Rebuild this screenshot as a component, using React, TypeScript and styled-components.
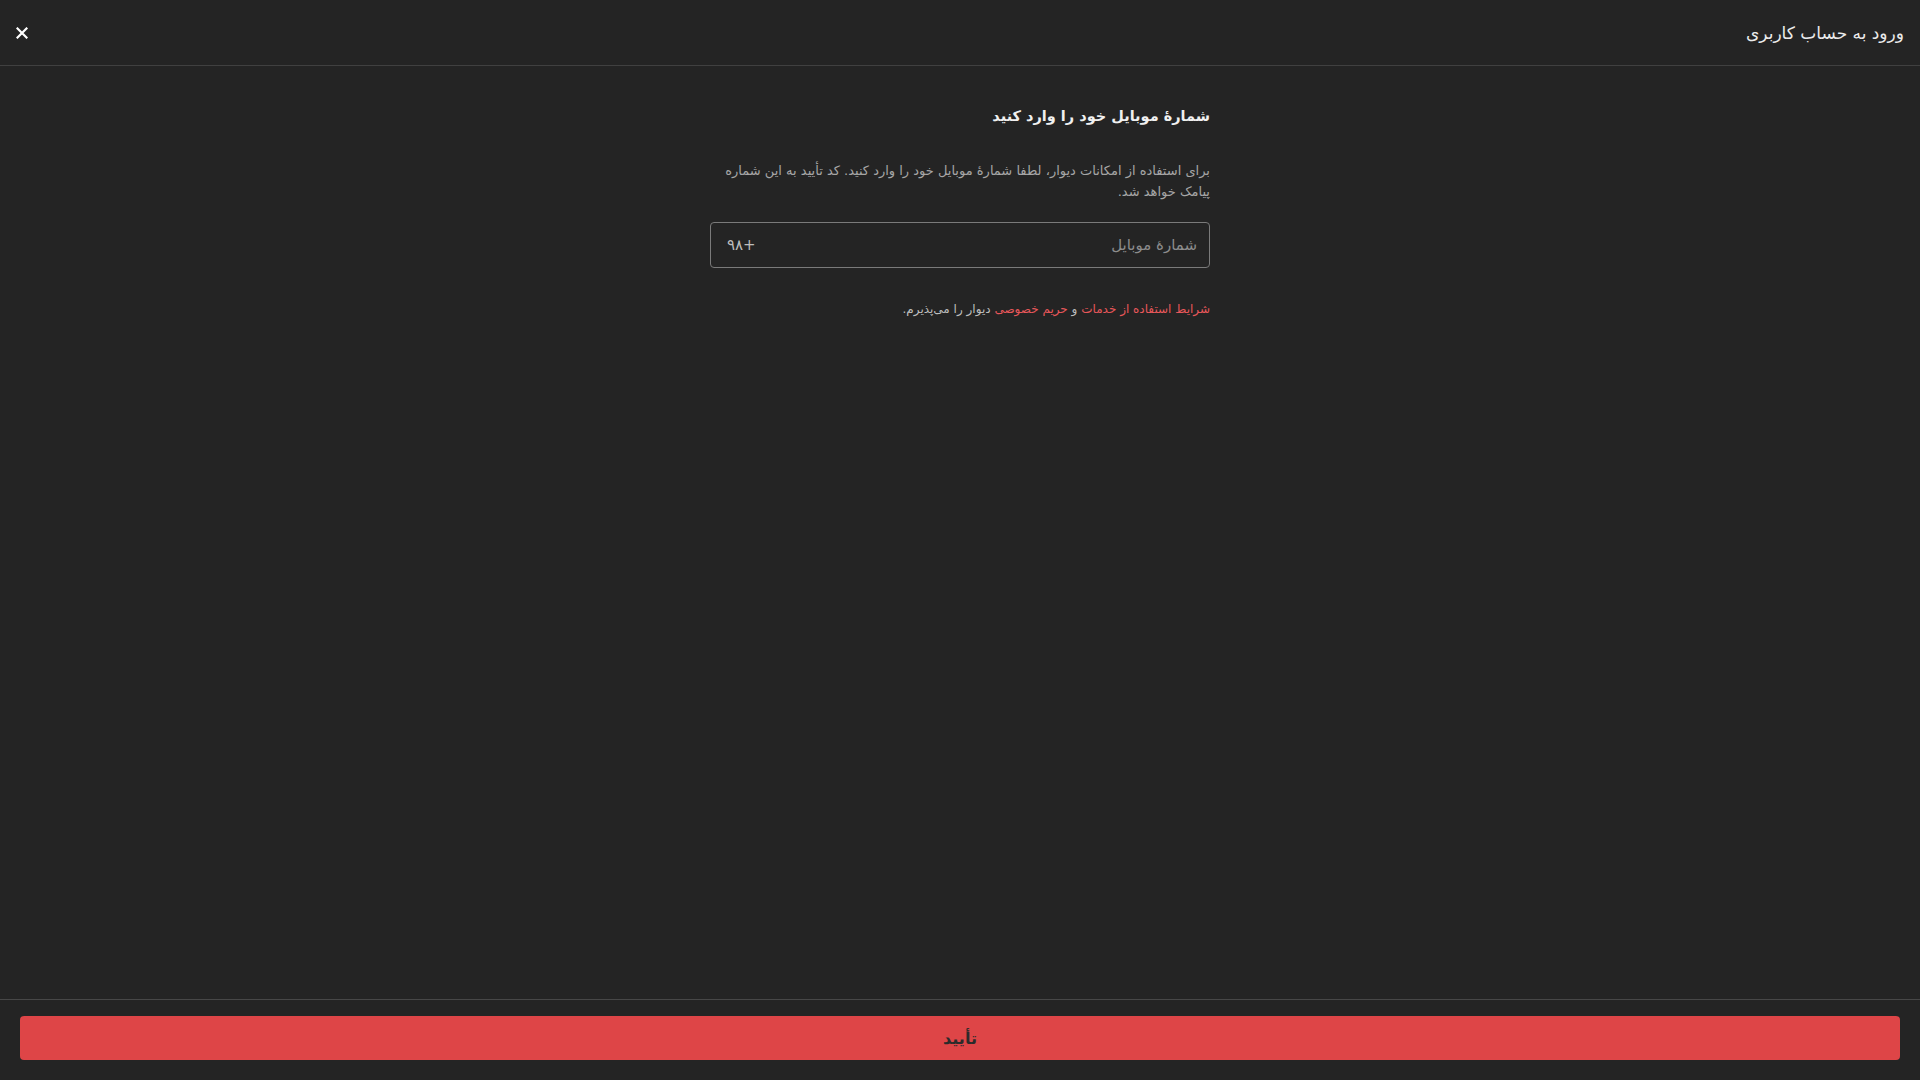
import React, { useState } from 'react'
import styled, { createGlobalStyle } from 'styled-components'

const GlobalStyle = createGlobalStyle`
  html, body, #root {
    margin: 0;
    height: 100%;
  }
  body {
    background: #242424;
    font-family: "DejaVu Sans", "Noto Sans", sans-serif;
    color: #e6e6e6;
  }
  * {
    box-sizing: border-box;
  }
`

const Page = styled.div`
  direction: rtl;
  height: 100vh;
  display: flex;
  flex-direction: column;
  background: #242424;
`

const Header = styled.header`
  height: 66px;
  flex: none;
  display: flex;
  align-items: center;
  justify-content: space-between;
  padding: 0 16px 0 16px;
  border-bottom: 1px solid #404040;
`

const Title = styled.h1`
  margin: 0;
  font-size: 17px;
  font-weight: 400;
  color: #ebebeb;
  line-height: 24px;
`

const CloseButton = styled.button`
  width: 24px;
  height: 24px;
  padding: 0;
  margin-left: -6px;
  border: none;
  background: transparent;
  display: flex;
  align-items: center;
  justify-content: center;
  cursor: pointer;
`

const Body = styled.main`
  flex: 1;
  display: flex;
  justify-content: center;
  padding-top: 38px;
`

const Form = styled.div`
  width: 500px;
  display: flex;
  flex-direction: column;
`

const Heading = styled.h2`
  margin: 0 0 32px;
  font-size: 14.5px;
  font-weight: 700;
  line-height: 24px;
  color: #f0f0f0;
`

const Description = styled.p`
  margin: 0 0 20px;
  font-size: 13px;
  line-height: 21px;
  color: #a6a6a6;
`

const Field = styled.label`
  height: 46px;
  display: flex;
  align-items: center;
  justify-content: space-between;
  padding: 0 10px 0 16px;
  border: 1px solid #7a7a7a;
  border-radius: 4px;
`

const Input = styled.input`
  flex: 1;
  min-width: 0;
  height: 100%;
  border: none;
  outline: none;
  background: transparent;
  font-family: inherit;
  font-size: 15px;
  color: #e6e6e6;
  direction: rtl;

  &::placeholder {
    color: #8c8c8c;
  }
`

const Prefix = styled.span`
  font-size: 15px;
  color: #bdbdbd;
  direction: ltr;
`

const Terms = styled.p`
  margin: 31px 0 0;
  font-size: 12px;
  line-height: 20px;
  color: #bdbdbd;
`

const TermsLink = styled.a`
  color: #e8575a;
  text-decoration: none;
`

const Footer = styled.footer`
  flex: none;
  border-top: 1px solid #474747;
  padding: 16px 20px 20px;
`

const SubmitButton = styled.button`
  width: 100%;
  height: 44px;
  border: none;
  border-radius: 4px;
  background: #de4547;
  color: #2b2b2b;
  font-family: inherit;
  font-size: 16px;
  font-weight: 700;
  cursor: pointer;
`

const CloseIcon = () => (
  <svg width="12" height="12" viewBox="0 0 12 12">
    <path d="M1.5 1.5 L10.5 10.5 M10.5 1.5 L1.5 10.5" stroke="#ffffff" strokeWidth="2.2" strokeLinecap="square" />
  </svg>
)

export default function App() {
  const [phone, setPhone] = useState('')

  return (
    <Page>
      <GlobalStyle />
      <Header>
        <Title>ورود به حساب کاربری</Title>
        <CloseButton aria-label="بستن">
          <CloseIcon />
        </CloseButton>
      </Header>
      <Body>
        <Form>
          <Heading>شمارهٔ موبایل خود را وارد کنید</Heading>
          <Description>
            برای استفاده از امکانات دیوار، لطفا شمارهٔ موبایل خود را وارد کنید. کد تأیید به این شماره پیامک خواهد شد.
          </Description>
          <Field>
            <Input
              value={phone}
              onChange={(e) => setPhone(e.target.value)}
              placeholder="شمارهٔ موبایل"
              inputMode="numeric"
            />
            <Prefix>۹۸+</Prefix>
          </Field>
          <Terms>
            <TermsLink href="#">شرایط استفاده از خدمات</TermsLink> و{' '}
            <TermsLink href="#">حریم خصوصی</TermsLink> دیوار را می‌پذیرم.
          </Terms>
        </Form>
      </Body>
      <Footer>
        <SubmitButton>تأیید</SubmitButton>
      </Footer>
    </Page>
  )
}
